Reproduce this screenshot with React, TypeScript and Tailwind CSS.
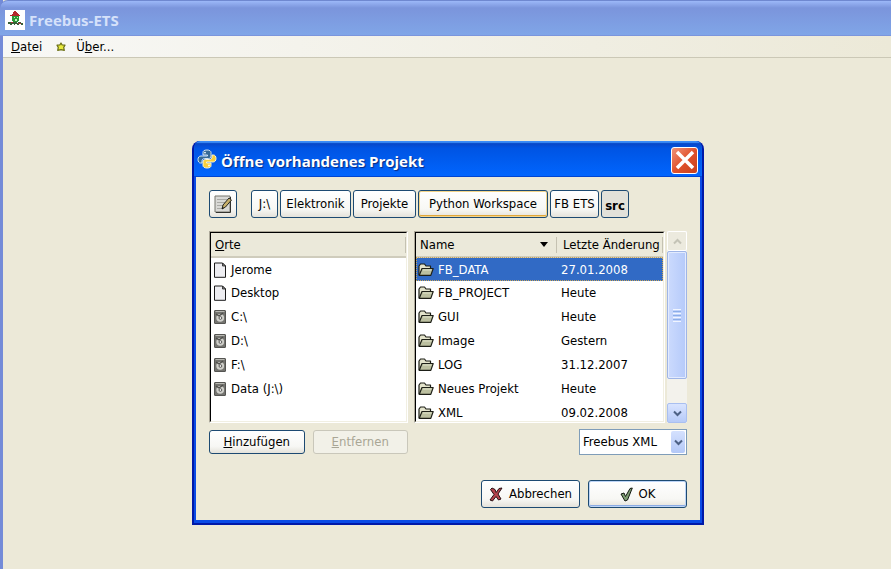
import React from 'react';

const xpButton =
  'flex items-center justify-center whitespace-nowrap rounded-[3px] border border-[#1d4a72] bg-linear-to-b from-white via-[#f7f7f4] via-70% to-[#e4e2da]';

function HouseLogo() {
  return (
    <svg viewBox="0 0 20 20" className="size-5 shrink-0" aria-hidden="true">
      <rect width="20" height="20" fill="#fff" />
      <path d="M9 1h2v1h1v1h1v1h1v1h1v1H5V5h2V4h1V2h1z" fill="#b5282d" />
      <path d="M7 6h7v5h-1v1H8v-1H7z" fill="#2a9a35" />
      <path d="M9 7h1v1H9zM12 7h1v1h-1zM10 9h2v2h-2z" fill="#c9efc0" />
      <path d="M3 12h4v1h1v-1h4v1h1v-1h3v1h2v2h-2v-1h-2v1h-2v-1h-2v1H9v-1H7v1H5v-1H3z" fill="#386038" />
      <path d="M6 12h2v1H6zM13 13h3v1h-3z" fill="#a33" />
    </svg>
  );
}

function StarIcon() {
  return (
    <svg viewBox="0 0 10 10" className="size-2.5" aria-hidden="true">
      <path
        d="M5 1l1.200 2 2.800.2-1.300 2.200.6 3L5 7.600 1.700 8.400l.6-3L1 3.200 3.800 3z"
        fill="#e8ea3c"
        stroke="#6b6f16"
        strokeWidth="1.200"
        strokeLinejoin="round"
      />
    </svg>
  );
}

function PythonLogo() {
  return (
    <svg viewBox="0 0 20 20" className="size-5 shrink-0" aria-hidden="true">
      <path
        d="M10 1C7 1 6 2 6 3.500V6h4.500v1H4C2 7 1 8.500 1 10.500S2 14 3.500 14H5v-2c0-1.600 1.200-2.500 2.700-2.500h4C13 9.500 14 8.500 14 7V3.500C14 2 12.500 1 10 1z"
        fill="#356a96"
        stroke="#d6e6f2"
      />
      <path
        d="M10 19c3 0 4-1 4-2.500V14H9.500v-1H16c2 0 3-1.500 3-3.500S18 6 16.500 6H15v2c0 1.600-1.200 2.500-2.700 2.500h-4C7 10.500 6 11.500 6 13v3.500C6 18 7.500 19 10 19z"
        fill="#f8cf3d"
        stroke="#fcf5cf"
      />
      <circle cx="8" cy="3.600" r=".9" fill="#fff" />
      <circle cx="12" cy="16.400" r=".9" fill="#fff" />
    </svg>
  );
}

function NoteIcon() {
  return (
    <svg viewBox="0 0 20 20" className="size-5" aria-hidden="true">
      <path d="M2 2h15v16H2z" fill="#d9d9d6" stroke="#76766f" />
      <path d="M17.500 3v15.500H3" fill="none" stroke="#33332f" />
      <path d="M4 5.500h10M4 8.500h8M4 11.500h6M4 14.500h5" stroke="#aaaaa5" />
      <path d="M9 15l1-4 6-7 2.500 2-6 7z" fill="#c8b16c" stroke="#262620" strokeLinejoin="round" />
      <path d="M9 15l.5-2 1.500 1z" fill="#111" />
    </svg>
  );
}

function PageIcon() {
  return (
    <svg viewBox="0 0 14 16" className="h-4 w-3.5" aria-hidden="true">
      <path d="M1.500 1h8L12.500 4v11.300h-11z" fill="#eeeef2" stroke="#1b1b1b" strokeLinejoin="round" />
      <path d="M9.500 1v3h3z" fill="#888" stroke="#222" strokeWidth=".8" />
    </svg>
  );
}

function DriveIcon() {
  return (
    <svg viewBox="0 0 14 16" className="h-4 w-3.5" aria-hidden="true">
      <rect x="1.500" y="1.500" width="11" height="13" rx=".5" fill="#73736f" stroke="#555552" />
      <path d="M2.500 2.500h9" stroke="#b8b8b2" />
      <circle cx="7.200" cy="8.800" r="3.900" fill="#d0d0cb" />
      <circle cx="7.400" cy="9" r="1.400" fill="#f4f4f4" stroke="#5a5a57" />
      <path d="M3 5l3 2 4-3" fill="none" stroke="#4c4c49" strokeWidth="1.300" />
    </svg>
  );
}

function FolderIcon() {
  return (
    <svg viewBox="0 0 16 14" className="h-3.5 w-4" aria-hidden="true">
      <path
        d="M1 12V3l1.500-2h4L8 3h4.500v2.500"
        fill="#e4e4cc"
        stroke="#1d1f17"
        strokeWidth="1.200"
        strokeLinejoin="round"
      />
      <path
        d="M1.200 12.400L4 5.500h11.200l-2.400 6.900z"
        fill="#bcc0a0"
        stroke="#1d1f17"
        strokeWidth="1.200"
        strokeLinejoin="round"
      />
      <path d="M5 7h8.500" stroke="#dfe2ca" />
    </svg>
  );
}

function CrossIcon() {
  return (
    <svg viewBox="0 0 14 15" className="h-[15px] w-3.5" aria-hidden="true">
      <path
        d="M3 1l3 1.500 1.200 3L10 1.500 13 1 9 7l3 5-2.500 1L7 9.500 3.500 14 1 13l4-5.500L1.500 2.500z"
        fill="#b5434c"
        stroke="#281012"
        strokeLinejoin="round"
      />
    </svg>
  );
}

function CheckIcon() {
  return (
    <svg viewBox="0 0 13 15" className="h-[15px] w-[13px]" aria-hidden="true">
      <path
        d="M1 7l3-1 1.500 3.500L10 1.500l2.300-.5L7.500 13 5 14z"
        fill="#7d9c72"
        stroke="#141a12"
        strokeLinejoin="round"
      />
    </svg>
  );
}

function Chevron({ up = false, color = '#4d6185' }: { up?: boolean; color?: string }) {
  return (
    <svg viewBox="0 0 9 7" className="h-[7px] w-[9px]" aria-hidden="true">
      <path d={up ? 'M1 5.500L4.500 2 8 5.500' : 'M1 1.500L4.500 5 8 1.500'} fill="none" stroke={color} strokeWidth="2" />
    </svg>
  );
}

const places = [
  { name: 'Jerome', drive: false },
  { name: 'Desktop', drive: false },
  { name: 'C:\\', drive: true },
  { name: 'D:\\', drive: true },
  { name: 'F:\\', drive: true },
  { name: 'Data (J:\\)', drive: true },
];

const files = [
  ['FB_DATA', '27.01.2008'],
  ['FB_PROJECT', 'Heute'],
  ['GUI', 'Heute'],
  ['Image', 'Gestern'],
  ['LOG', '31.12.2007'],
  ['Neues Projekt', 'Heute'],
  ['XML', '09.02.2008'],
];

function ListFrame({ children }: { children: React.ReactNode }) {
  return (
    <div className="h-48 min-w-0 flex-1 border border-t-[#aca899] border-r-white border-b-white border-l-[#aca899]">
      <div className="h-full overflow-hidden border border-t-black border-r-[#f1efe2] border-b-[#f1efe2] border-l-black bg-white">
        {children}
      </div>
    </div>
  );
}

function PathBar() {
  return (
    <div className="flex h-7 gap-0.5">
      <button className={`${xpButton} mr-3 w-7`} aria-label="Dateiname eingeben">
        <NoteIcon />
      </button>
      <button className={`${xpButton} w-[27px]`}>J:\</button>
      <button className={`${xpButton} w-[71px]`}>Elektronik</button>
      <button className={`${xpButton} w-[63px]`}>Projekte</button>
      <button className={`${xpButton} w-[130px] shadow-[inset_0_0_0_1px_#f3d48a,inset_0_-2px_0_#dfa63a]`}>
        Python Workspace
      </button>
      <button className={`${xpButton} w-[49px]`}>FB ETS</button>
      <button className="flex w-7 items-center justify-center rounded-[3px] border border-[#1d4a72] bg-[#e2e1d9] pt-1 font-bold">
        src
      </button>
    </div>
  );
}

function PlacesList() {
  return (
    <div className="flex">
      <ListFrame>
        <table className="w-full border-collapse text-left">
          <thead>
            <tr className="h-6 border-b-2 border-[#cfccbc] bg-[#ebe9da]">
              <th className="p-0 pl-1 font-normal">
                <div className="border-r border-[#c5c2b2]">
                  <u>O</u>rte
                </div>
              </th>
            </tr>
          </thead>
          <tbody>
            {places.map((place) => (
              <tr key={place.name} className="h-6">
                <td className="p-0 pl-0.5">
                  <div className="flex items-center gap-1">
                    {place.drive ? <DriveIcon /> : <PageIcon />}
                    {place.name}
                  </div>
                </td>
              </tr>
            ))}
          </tbody>
        </table>
      </ListFrame>
    </div>
  );
}

function FileList() {
  return (
    <ListFrame>
      <table className="w-full table-fixed border-collapse text-left whitespace-nowrap">
        <thead>
          <tr className="h-6 border-b-2 border-[#cfccbc] bg-[#ebe9da]">
            <th className="p-0 pl-1 font-normal">
              <div className="flex items-center justify-between border-r border-[#c5c2b2] pr-2">
                Name
                <svg viewBox="0 0 8 5" className="h-[5px] w-2" aria-hidden="true">
                  <path d="M0 0h8L4 5z" fill="#000" />
                </svg>
              </div>
            </th>
            <th className="w-[106px] p-0 pl-1.5 font-normal">
              <div className="border-r border-[#c5c2b2]">Letzte Änderung</div>
            </th>
          </tr>
        </thead>
        <tbody>
          {files.map(([name, date], index) => (
            <tr
              key={name}
              className={
                index === 0
                  ? 'h-6 bg-[#316ac5] text-white outline-1 -outline-offset-1 outline-dotted outline-[#c9a458]'
                  : 'h-6'
              }
            >
              <td className="p-0 pl-0.5">
                <div className="flex items-center gap-1">
                  <FolderIcon />
                  {name}
                </div>
              </td>
              <td className="p-0 pl-1">{date}</td>
            </tr>
          ))}
        </tbody>
      </table>
    </ListFrame>
  );
}

function ScrollBar() {
  return (
    <div className="flex h-48 w-5 flex-col bg-[#f3f2ec]">
      <button
        className="flex h-5 items-center justify-center rounded-[2px] border border-white bg-[#eceade]"
        aria-label="Nach oben"
      >
        <Chevron up color="#c4c3b6" />
      </button>
      <div className="flex h-32 flex-col items-center justify-center gap-px rounded-[2px] border border-[#9fb5e6] bg-linear-to-r from-[#cbdafd] to-[#b5cafa] shadow-[inset_0_0_0_1px_#e3ebfe]">
        <span className="h-px w-2 bg-[#f0f5ff]" />
        <span className="h-px w-2 bg-[#8caee8]" />
        <span className="h-px w-2 bg-[#f0f5ff]" />
        <span className="h-px w-2 bg-[#8caee8]" />
        <span className="h-px w-2 bg-[#f0f5ff]" />
        <span className="h-px w-2 bg-[#8caee8]" />
        <span className="h-px w-2 bg-[#f0f5ff]" />
      </div>
      <button
        className="mt-auto flex h-5 items-center justify-center rounded-[2px] border border-[#a9bff0] bg-linear-to-b from-[#d9e4ff] to-[#b6caf8]"
        aria-label="Nach unten"
      >
        <Chevron />
      </button>
    </div>
  );
}

function OpenDialog() {
  return (
    <section
      role="dialog"
      aria-labelledby="dialog-title"
      className="absolute top-[141px] left-[189px] w-lg overflow-hidden rounded-t-lg border-x-2 border-b-2 border-[#0019a8] bg-[#0a4be6] px-0.5 pb-[3px]"
    >
      <header className="-mx-0.5 flex h-9 items-center gap-1 bg-linear-to-b from-[#0a40b8] via-[#0054e3] via-20% to-[#0166ff] pr-1 pl-[3px] shadow-[inset_0_2px_1px_#3b8df8,inset_0_-1px_0_#0045d0]">
        <PythonLogo />
        <h1
          id="dialog-title"
          className="pt-1 font-['Open_Sans','Noto_Sans',sans-serif] text-[15px] font-bold text-white [text-shadow:1px_1px_1px_#0a2a80]"
        >
          Öffne vorhandenes Projekt
        </h1>
        <button
          className="mt-0.5 ml-auto flex size-[27px] items-center justify-center rounded-[3px] border border-white bg-linear-to-br from-[#ee9277] via-[#e1522c] to-[#c8401c]"
          aria-label="Schließen"
        >
          <svg viewBox="0 0 20 20" className="size-5" aria-hidden="true">
            <path d="M2 2l16 16M18 2L2 18" stroke="#fff" strokeWidth="3.500" />
          </svg>
        </button>
      </header>

      <div className="bg-[#ece9d8] px-[13px] pt-[13px] pb-3">
        <PathBar />

        <div className="mt-[13px] grid grid-cols-[199px_1fr] gap-x-1.5 gap-y-1.5">
          <PlacesList />
          <div className="flex gap-0.5">
            <FileList />
            <ScrollBar />
          </div>
          <div className="flex h-[26px] items-center gap-2">
            <button className={`${xpButton} h-6 flex-1`}>
              <span>
                <u>H</u>inzufügen
              </span>
            </button>
            <button
              disabled
              className="flex h-6 flex-1 items-center justify-center rounded-[3px] border border-[#c9c7ba] bg-[#f2f1e8] text-[#a9a695]"
            >
              <span>
                <u>E</u>ntfernen
              </span>
            </button>
          </div>
          <div className="relative ml-auto h-[26px] w-[108px]">
            <select
              aria-label="Dateityp"
              className="size-full appearance-none border border-[#7f9db9] bg-white pl-[3px] outline-none"
            >
              <option>Freebus XML</option>
            </select>
            <span className="pointer-events-none absolute inset-y-[2px] right-[2px] flex w-3.5 items-center justify-center rounded-[2px] bg-linear-to-b from-[#d5e1fe] to-[#b3c8f7]">
              <Chevron />
            </span>
          </div>
        </div>

        <div className="mt-[25px] flex justify-end gap-2">
          <button className={`${xpButton} h-7 w-[99px] gap-1.5`}>
            <CrossIcon />
            Abbrechen
          </button>
          <button
            className={`${xpButton} h-7 w-[99px] gap-1.5 shadow-[inset_0_0_0_1px_#bcd4f6,inset_0_-2px_0_#8aabe4]`}
          >
            <CheckIcon />
            OK
          </button>
        </div>
      </div>
    </section>
  );
}

export default function App() {
  return (
    <div className="relative flex min-h-screen flex-col border-l-3 border-[#748bd8] bg-[#ece9d8] font-['DejaVu_Sans_Condensed','DejaVu_Sans',sans-serif] text-[13px] leading-4 text-black">
      <header className="-ml-[3px] flex h-9 items-center gap-1 rounded-tl-lg border-t border-[#6f88d0] bg-linear-to-b from-[#9cb8f8] via-[#7b95dc] via-20% to-[#80a6e8] pt-0.5 pl-[5px] shadow-[inset_0_-1px_0_#7b95dc]">
        <HouseLogo />
        <span className="font-['Open_Sans','Noto_Sans',sans-serif] text-[15px] font-bold text-[#d5e1fa]">
          Freebus-ETS
        </span>
      </header>
      <nav className="flex h-[22px] items-center border-b border-[#cbc8b6] bg-linear-to-r from-[#f8f8f6] to-[#ece9d8] pl-2">
        <button>
          <u>D</u>atei
        </button>
        <button className="ml-3.5 flex items-center gap-2.5">
          <StarIcon />
          <span>
            Ü<u>b</u>er...
          </span>
        </button>
      </nav>
      <main className="flex-1">
        <OpenDialog />
      </main>
    </div>
  );
}
